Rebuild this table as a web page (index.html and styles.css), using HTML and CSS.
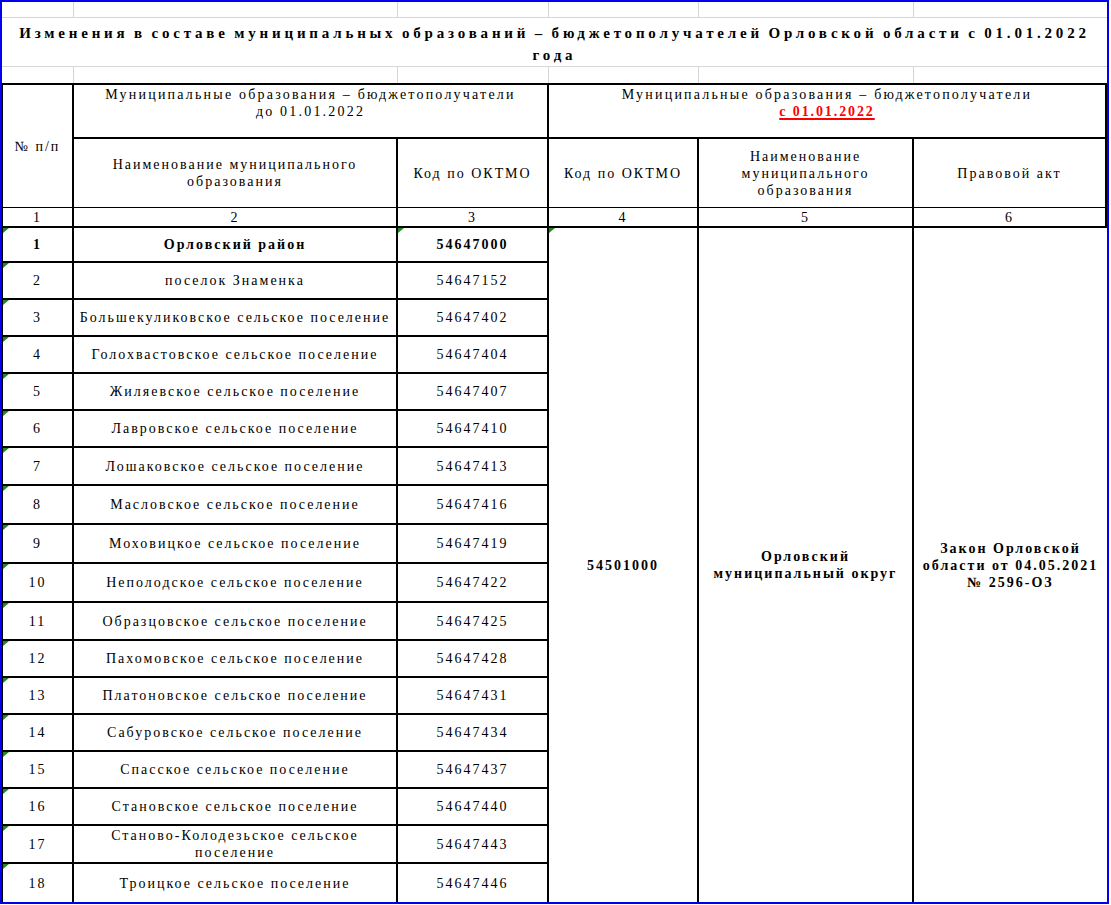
FILE: index.html
```html
<!DOCTYPE html>
<html lang="ru">
<head>
<meta charset="utf-8">
<title>Изменения в составе муниципальных образований</title>
<link rel="stylesheet" href="styles.css">
</head>
<body>
<div class="sheet">
  <div class="top">
    <div class="gcell"></div><div class="gcell"></div><div class="gcell"></div><div class="gcell"></div><div class="gcell"></div><div class="gcell last"></div>
    <div class="title">
      <div class="title-line">Изменения в составе муниципальных образований – бюджетополучателей Орловской области с 01.01.2022</div>
      <div class="title-end">года</div>
    </div>
    <div class="gcell nob"></div><div class="gcell nob"></div><div class="gcell nob"></div><div class="gcell nob"></div><div class="gcell nob"></div><div class="gcell nob last"></div>
  </div>
  <div class="tbl">
    <div class="cell thin h-num">№ п/п</div>
    <div class="cell h-top h-old"><span>Муниципальные образования – бюджетополучатели<br>до 01.01.2022</span></div>
    <div class="cell h-top h-new edge"><span>Муниципальные образования – бюджетополучатели<br><span class="red">с 01.01.2022</span></span></div>

    <div class="cell thin"><span>Наименование муниципального<br>образования</span></div>
    <div class="cell thin">Код по ОКТМО</div>
    <div class="cell thin">Код по ОКТМО</div>
    <div class="cell thin"><span>Наименование<br>муниципального<br>образования</span></div>
    <div class="cell thin edge">Правовой акт</div>

    <div class="cell idx">1</div>
    <div class="cell idx">2</div>
    <div class="cell idx">3</div>
    <div class="cell idx">4</div>
    <div class="cell idx">5</div>
    <div class="cell idx edge">6</div>

    <div class="cell bold merged m-code mark">54501000</div>
    <div class="cell bold merged m-name"><span>Орловский<br>муниципальный округ</span></div>
    <div class="cell bold merged m-act"><span>Закон Орловской<br>области от 04.05.2021<br>№ 2596-ОЗ</span></div>

    <div class="cell bold mark">1</div><div class="cell bold">Орловский район</div><div class="cell bold mark">54647000</div>
    <div class="cell mark">2</div><div class="cell">поселок Знаменка</div><div class="cell">54647152</div>
    <div class="cell mark">3</div><div class="cell">Большекуликовское сельское поселение</div><div class="cell">54647402</div>
    <div class="cell mark">4</div><div class="cell">Голохвастовское сельское поселение</div><div class="cell">54647404</div>
    <div class="cell mark">5</div><div class="cell">Жиляевское сельское поселение</div><div class="cell">54647407</div>
    <div class="cell mark">6</div><div class="cell">Лавровское сельское поселение</div><div class="cell">54647410</div>
    <div class="cell mark">7</div><div class="cell">Лошаковское сельское поселение</div><div class="cell">54647413</div>
    <div class="cell mark">8</div><div class="cell">Масловское сельское поселение</div><div class="cell">54647416</div>
    <div class="cell mark">9</div><div class="cell">Моховицкое сельское поселение</div><div class="cell">54647419</div>
    <div class="cell mark">10</div><div class="cell">Неполодское сельское поселение</div><div class="cell">54647422</div>
    <div class="cell mark">11</div><div class="cell">Образцовское сельское поселение</div><div class="cell">54647425</div>
    <div class="cell mark">12</div><div class="cell">Пахомовское сельское поселение</div><div class="cell">54647428</div>
    <div class="cell mark">13</div><div class="cell">Платоновское сельское поселение</div><div class="cell">54647431</div>
    <div class="cell mark">14</div><div class="cell">Сабуровское сельское поселение</div><div class="cell">54647434</div>
    <div class="cell mark">15</div><div class="cell">Спасское сельское поселение</div><div class="cell">54647437</div>
    <div class="cell mark">16</div><div class="cell">Становское сельское поселение</div><div class="cell">54647440</div>
    <div class="cell mark">17</div><div class="cell"><span>Станово-Колодезьское сельское<br>поселение</span></div><div class="cell">54647443</div>
    <div class="cell mark last-row">18</div><div class="cell last-row">Троицкое сельское поселение</div><div class="cell last-row">54647446</div>
  </div>
</div>
</body>
</html>
```
FILE: styles.css
```css
html, body {
  margin: 0;
  padding: 0;
  background: #ffffff;
  font-family: "Liberation Serif", "DejaVu Serif", serif;
}

.sheet {
  box-sizing: border-box;
  width: 1109px;
  height: 904px;
  border: 2px solid #0000ee;
  overflow: hidden;
  font-family: "Liberation Serif", "DejaVu Serif", serif;
  font-size: 14px;
  line-height: 17px;
  letter-spacing: 2px;
  color: #000;
}

.top {
  display: grid;
  grid-template-columns: 72px 324px 151px 150px 215px 193px;
  grid-template-rows: 16px 49px 16px;
}

.gcell {
  box-sizing: border-box;
  border-right: 1px solid #d6d6d6;
  border-bottom: 1px solid #d6d6d6;
}

.gcell.last {
  border-right: none;
}

.gcell.nob {
  border-bottom: none;
}

.title {
  grid-column: 1 / -1;
  box-sizing: border-box;
  border-bottom: 1px solid #d6d6d6;
  padding: 4px 0 0 0;
  font-weight: bold;
  font-size: 15px;
  letter-spacing: 3.8px;
  word-spacing: -2px;
  line-height: 22px;
}

.title-line {
  white-space: nowrap;
  text-align: center;
}

.title-end {
  text-align: center;
}

.tbl {
  display: grid;
  grid-template-columns: 71px 324px 151px 150px 215px 193px;
  grid-template-rows: 54px 69px 20px 35px 37px 37px 37px 37px 37px 38px 39px 39px 39px 38px 37px 37px 37px 37px 37px 38px 38px;
  border-top: 2px solid #000;
  border-left: 1px solid #000;
}

.cell {
  box-sizing: border-box;
  position: relative;
  display: flex;
  align-items: center;
  justify-content: center;
  text-align: center;
  border-right: 2px solid #000;
  border-bottom: 2px solid #000;
  padding: 0 2px;
}

.cell.thin {
  border-bottom-width: 1px;
}

.cell.edge {
  border-right: 2px solid #000;
}

.h-num {
  grid-column: 1;
  grid-row: 1 / 3;
}

.h-top {
  align-items: flex-start;
  padding-top: 1px;
  letter-spacing: 2.2px;
}

.h-old {
  grid-column: 2 / 4;
  grid-row: 1;
}

.h-new {
  grid-column: 4 / 7;
  grid-row: 1;
}

.red {
  color: #ff0000;
  font-weight: bold;
  letter-spacing: 1.9px;
  text-decoration: underline;
  text-underline-offset: 2px;
  text-decoration-thickness: 2px;
}

.idx {
  padding-top: 1px;
}

.bold {
  font-weight: bold;
}

.merged {
  grid-row: 4 / 22;
  border-bottom: none;
}

.m-code {
  grid-column: 4;
}

.m-name {
  grid-column: 5;
}

.m-act {
  grid-column: 6;
  border-right: none;
}

.last-row {
  border-bottom: none;
}

.mark::before {
  content: "";
  position: absolute;
  top: 0;
  left: 0;
  width: 6px;
  height: 5px;
  background: #1f8a1f;
  clip-path: polygon(0 0, 100% 0, 0 100%);
}
```
